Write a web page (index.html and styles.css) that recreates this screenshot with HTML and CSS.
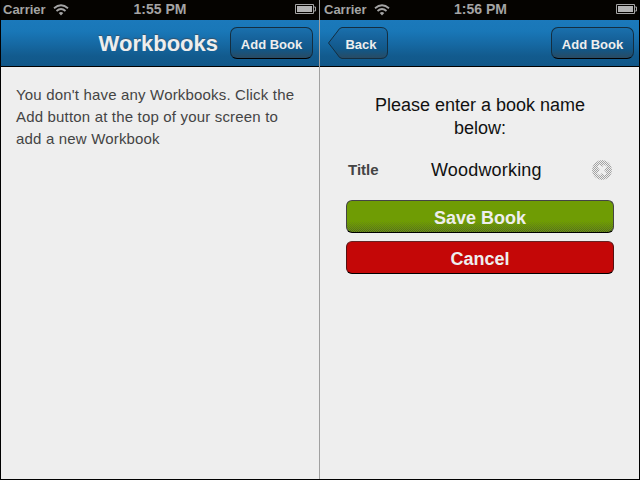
FILE: index.html
```html
<!DOCTYPE html>
<html lang="en">
<head>
<meta charset="utf-8">
<title>Workbooks</title>
<link rel="stylesheet" href="styles.css">
</head>
<body>
<main class="screens">
  <section class="phone">
    <div class="status">
      <div class="carrier"><span>Carrier</span>
        <svg class="wifi" width="16" height="12" viewBox="0 0 16 12"><path d="M1 4.300Q8-1.800 15 4.300M3.500 7Q8 3 12.500 7" fill="none" stroke="#a4a4a4" stroke-width="1.800"/><path d="M5.700 9Q8 7 10.300 9L8 11.400Z" fill="#a4a4a4"/></svg>
      </div>
      <time>1:55 PM</time>
      <svg class="battery" width="21" height="10" viewBox="0 0 21 10"><path d="M.5.5H18.500V9.500H.5Z" fill="none" stroke="#a4a4a4"/><path d="M2 2H17V8H2Z" fill="#b4b4b4"/><path d="M19 3H20.500V7H19" fill="none" stroke="#a4a4a4"/></svg>
    </div>
    <header class="bar">
      <h1>Workbooks</h1>
      <button class="nav-button">Add Book</button>
    </header>
    <p class="empty">You don't have any Workbooks. Click the<br>Add button at the top of your screen to<br>add a new Workbook</p>
  </section>
  <section class="phone second">
    <div class="status">
      <div class="carrier"><span>Carrier</span>
        <svg class="wifi" width="16" height="12" viewBox="0 0 16 12"><path d="M1 4.300Q8-1.800 15 4.300M3.500 7Q8 3 12.500 7" fill="none" stroke="#a4a4a4" stroke-width="1.800"/><path d="M5.700 9Q8 7 10.300 9L8 11.400Z" fill="#a4a4a4"/></svg>
      </div>
      <time>1:56 PM</time>
      <svg class="battery" width="21" height="10" viewBox="0 0 21 10"><path d="M.5.5H18.500V9.500H.5Z" fill="none" stroke="#a4a4a4"/><path d="M2 2H17V8H2Z" fill="#b4b4b4"/><path d="M19 3H20.500V7H19" fill="none" stroke="#a4a4a4"/></svg>
    </div>
    <header class="bar">
      <button class="back-button">
        <svg class="back-shape" width="60" height="32" viewBox="0 0 60 32">
          <defs><linearGradient id="back" x2="0" y2="1"><stop stop-color="#1a70ad"/><stop offset=".45" stop-color="#155f96"/><stop offset=".7" stop-color="#115889"/><stop offset="1" stop-color="#294a62"/></linearGradient></defs>
          <path d="M14 .5H53Q59.500.5 59.500 7V25Q59.500 31.500 53 31.500H14Q11.500 31.500 9 27L.5 16L9 5Q11.500.5 14 .5Z" fill="url(#back)" stroke="#142e40"/>
        </svg>
        <span>Back</span>
      </button>
      <button class="nav-button">Add Book</button>
    </header>
    <form class="book-form">
      <p class="prompt">Please enter a book name<br>below:</p>
      <div class="field">
        <label>Title</label>
        <span class="value">Woodworking</span>
        <svg class="clear" width="20" height="20" viewBox="0 0 20 20"><defs><pattern id="dots" width="2" height="2" patternUnits="userSpaceOnUse"><path d="M0 0H1V1H0ZM1 1H2V2H1Z" fill="#a2a2a2"/></pattern></defs><circle cx="10" cy="10" r="10" fill="url(#dots)"/><path d="M6.500 5.500L13.500 14.500M13.500 5.500L6.500 14.500" stroke="#eee" stroke-width="3.600"/></svg>
      </div>
      <button type="button" class="action save">Save Book</button>
      <button type="button" class="action cancel">Cancel</button>
    </form>
  </section>
</main>
</body>
</html>
```
FILE: styles.css
```css
* { box-sizing: border-box; }
body { margin: 0; background: #000; font-family: "Liberation Sans", Arial, sans-serif; }
.screens { display: grid; grid-template-columns: 319px 320px; width: 640px; height: 480px; padding: 0 1px 1px 0; }
.phone { background: #eee; border-left: 1px solid #000; }
.second { border-left-color: #a0a0a0; }
h1, p { margin: 0; }
button { font: inherit; padding: 0; }
.status { display: grid; grid-template-columns: 1fr auto 1fr; height: 20px; background: #050300; color: #a4a4a4; font-weight: bold; font-size: 14px; line-height: 19px; }
.carrier { display: flex; align-items: center; gap: 7px; padding-left: 2px; font-size: 13px; line-height: 18px; }
.second .carrier { padding-left: 4px; }
.status time { white-space: nowrap; }
.second time { margin-left: 2px; }
.wifi { margin-top: -1px; }
.battery { justify-self: end; margin: 4px 3px 0 0; }
.second .battery { margin-right: 2px; }
.bar { display: flex; height: 47px; justify-content: flex-end; align-items: center; padding: 0 6px 1px 8px; background: linear-gradient(#1b79bb 0, #1977b7 25%, #166aa5 50%, #125b8e 78%, #115789 100%); border-bottom: 1px solid #000; }
.second .bar { padding-right: 5px; }
h1 { color: #eee; font-size: 22px; line-height: 26px; margin-right: 12px; padding-top: 2px; text-shadow: 0 -1px 1px #36536a; }
.nav-button { width: 83px; height: 32px; border: 1px solid #142e40; border-bottom-color: #000; border-radius: 7px; background: linear-gradient(#1a70ad 0, #155f96 45%, #115889 70%, #294a62 100%); color: #eee; font-weight: bold; font-size: 13px; line-height: 30px; padding-top: 2px; }
.back-button { position: relative; width: 60px; height: 32px; border: 0; margin-right: auto; background: none; color: #eee; font-weight: bold; font-size: 13px; line-height: 32px; padding: 2px 0 0 6px; }
.back-shape { position: absolute; inset: 0; }
.back-button span { position: relative; }
.empty { padding: 17px 0 0 15px; color: #444; font-size: 15px; line-height: 22px; letter-spacing: .175px; white-space: nowrap; }
.book-form { padding: 27px 25px 0 26px; }
.prompt { text-align: center; font-size: 18px; line-height: 23px; color: #111; }
.field { display: flex; align-items: center; height: 40px; margin-top: 10px; padding: 0 2px; }
.field label { width: 83px; color: #444; font-size: 15px; font-weight: bold; margin-top: -2px; }
.value { color: #111; font-size: 18px; letter-spacing: .18px; }
.clear { margin-left: auto; }
.action { display: block; width: 268px; height: 33px; border: 1px solid #444; border-bottom-color: #000; border-radius: 6px; color: #eee; font-weight: bold; font-size: 18px; line-height: 33px; padding-top: 1px; }
.save {
  margin-top: 10px;
  background:
    linear-gradient(#6f9c04 65%, transparent 100%),
    repeating-conic-gradient(#4c5a30 0 25%, #6f9c04 0 50%) left bottom / 2px 2px;
}
.cancel { margin-top: 8px; background: #c40707; border-color: #662323 #511 #000; }
```
